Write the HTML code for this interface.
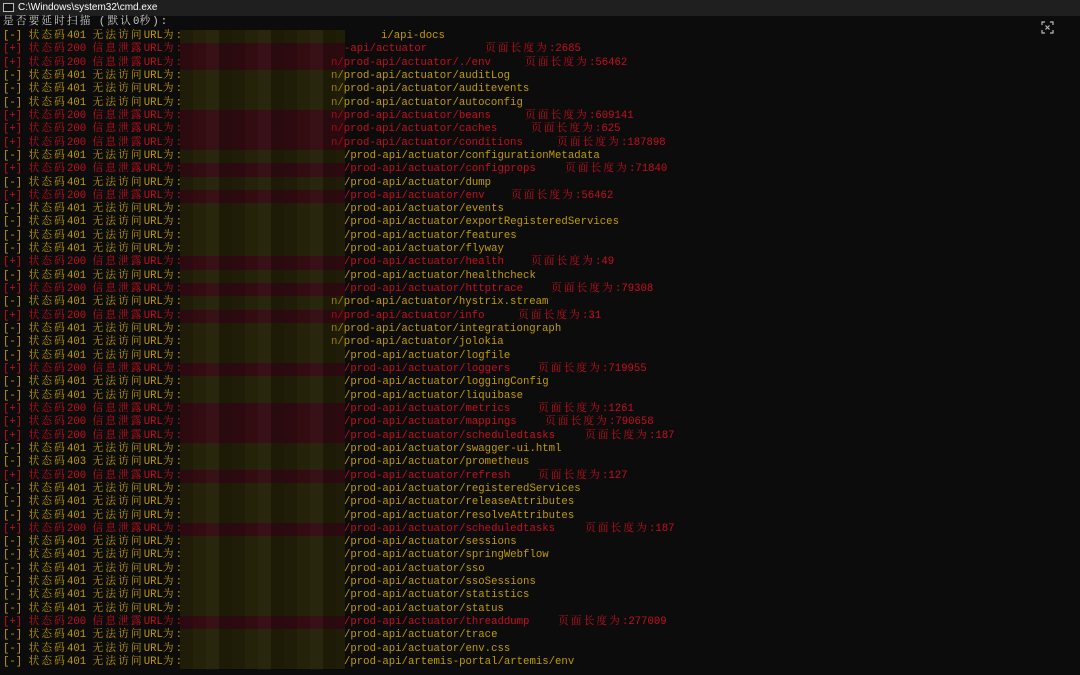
<!DOCTYPE html>
<html><head><meta charset="utf-8"><style>
*{margin:0;padding:0;box-sizing:border-box}
body{width:1080px;height:675px;background:#0c0c0c;overflow:hidden;position:relative;font-family:"Liberation Mono","Noto Serif CJK SC",monospace;font-size:10.67px}
.tb{position:absolute;left:0;top:0;width:1080px;height:16px;background:#1f1f1f;color:#fff;font-family:"Liberation Sans",sans-serif;font-size:10px;line-height:16px}
.tb .ic{position:absolute;left:3px;top:3px;width:11px;height:9px;border:1px solid #bbb;background:#111}
.tb span.t{position:absolute;left:18px;top:0}
.l{position:absolute;left:3px;height:13.32px;line-height:13.32px;white-space:pre}
.a{position:absolute;height:13.32px;line-height:13.32px;white-space:pre}
.c{letter-spacing:2.13px}
.Y{color:#c19c00}.R{color:#c50f1f}.G{color:#cccccc}
.m{position:absolute;left:180px;width:165px;height:13.32px}
.mz{position:absolute;left:180px;top:30px;width:165px;height:640px;background:repeating-linear-gradient(90deg,rgba(0,0,0,.15) 0 13px,rgba(0,0,0,0) 13px 26px,rgba(255,255,255,.02) 26px 39px,rgba(0,0,0,.2) 39px 52px);}
.x{position:absolute;left:1041px;top:21px;width:13px;height:13px}
</style></head><body>
<div class="tb"><div class="ic"></div><span class="t">C:\Windows\system32\cmd.exe</span></div>
<svg class="x" viewBox="0 0 13 13" fill="none" stroke="#bbb" stroke-width="1.2"><path d="M1 4V1h3M9 1h3v3M12 9v3H9M4 12H1V9M4.5 4.5l4 4M8.5 4.5l-4 4"/></svg>
<div class="l G" style="top:16px"><span class="c">是否要延时扫描</span> <span class="c">(默认</span>0<span class="c">秒):</span></div>
<div id="lines"></div>
<script>
var L=[
["Y",401,"i/api-docs",381],
["R",200,"-api/actuator",344,"页面长度为:2685",485],
["R",200,"n/prod-api/actuator/./env",331,"页面长度为:56462",525],
["Y",401,"n/prod-api/actuator/auditLog",331],
["Y",401,"n/prod-api/actuator/auditevents",331],
["Y",401,"n/prod-api/actuator/autoconfig",331],
["R",200,"n/prod-api/actuator/beans",331,"页面长度为:609141",525],
["R",200,"n/prod-api/actuator/caches",331,"页面长度为:625",531],
["R",200,"n/prod-api/actuator/conditions",331,"页面长度为:187898",557],
["Y",401,"/prod-api/actuator/configurationMetadata",344],
["R",200,"/prod-api/actuator/configprops",344,"页面长度为:71840",565],
["Y",401,"/prod-api/actuator/dump",344],
["R",200,"/prod-api/actuator/env",344,"页面长度为:56462",511],
["Y",401,"/prod-api/actuator/events",344],
["Y",401,"/prod-api/actuator/exportRegisteredServices",344],
["Y",401,"/prod-api/actuator/features",344],
["Y",401,"/prod-api/actuator/flyway",344],
["R",200,"/prod-api/actuator/health",344,"页面长度为:49",531],
["Y",401,"/prod-api/actuator/healthcheck",344],
["R",200,"/prod-api/actuator/httptrace",344,"页面长度为:79308",551],
["Y",401,"n/prod-api/actuator/hystrix.stream",331],
["R",200,"n/prod-api/actuator/info",331,"页面长度为:31",518],
["Y",401,"n/prod-api/actuator/integrationgraph",331],
["Y",401,"n/prod-api/actuator/jolokia",331],
["Y",401,"/prod-api/actuator/logfile",344],
["R",200,"/prod-api/actuator/loggers",344,"页面长度为:719955",538],
["Y",401,"/prod-api/actuator/loggingConfig",344],
["Y",401,"/prod-api/actuator/liquibase",344],
["R",200,"/prod-api/actuator/metrics",344,"页面长度为:1261",538],
["R",200,"/prod-api/actuator/mappings",344,"页面长度为:790658",545],
["R",200,"/prod-api/actuator/scheduledtasks",344,"页面长度为:187",585],
["Y",401,"/prod-api/actuator/swagger-ui.html",344],
["Y",403,"/prod-api/actuator/prometheus",344],
["R",200,"/prod-api/actuator/refresh",344,"页面长度为:127",538],
["Y",401,"/prod-api/actuator/registeredServices",344],
["Y",401,"/prod-api/actuator/releaseAttributes",344],
["Y",401,"/prod-api/actuator/resolveAttributes",344],
["R",200,"/prod-api/actuator/scheduledtasks",344,"页面长度为:187",585],
["Y",401,"/prod-api/actuator/sessions",344],
["Y",401,"/prod-api/actuator/springWebflow",344],
["Y",401,"/prod-api/actuator/sso",344],
["Y",401,"/prod-api/actuator/ssoSessions",344],
["Y",401,"/prod-api/actuator/statistics",344],
["Y",401,"/prod-api/actuator/status",344],
["R",200,"/prod-api/actuator/threaddump",344,"页面长度为:277009",558],
["Y",401,"/prod-api/actuator/trace",344],
["Y",401,"/prod-api/actuator/env.css",344],
["Y",401,"/prod-api/artemis-portal/artemis/env",344]];
var h="";
L.forEach(function(r,i){var t=(30+13.32*i).toFixed(2);var Y=r[0]=="Y";
var msg=Y?'<span class="c">无法访问</span>URL<span class="c">为:</span>':'<span class="c">信息泄露</span>URL<span class="c">为:</span>';
h+='<div class="l '+r[0]+'" style="top:'+t+'px">['+(Y?'-':'+')+'] <span class="c">状态码</span>'+r[1]+' '+msg+'</div>';
h+='<div class="m" style="top:'+t+'px;background:'+(Y?'#242208':'#330c12')+'"></div>';
h+='<div class="a '+r[0]+'" style="top:'+t+'px;left:'+r[3]+'px">'+r[2]+'</div>';
if(r[4])h+='<div class="a '+r[0]+'" style="top:'+t+'px;left:'+r[5]+'px"><span class="c">页面长度为</span>'+r[4].slice(5)+'</div>';});
document.getElementById("lines").innerHTML=h+'<div class="mz"></div>';
</script>
</body></html>
